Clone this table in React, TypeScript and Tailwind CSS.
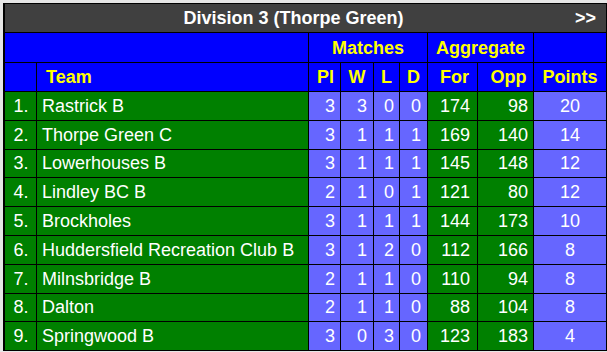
import React from "react";

type Row = {
  pos: number;
  team: string;
  pl: number;
  w: number;
  l: number;
  d: number;
  f: number;
  opp: number;
  pts: number;
};

const rows: Row[] = [
  { pos: 1, team: "Rastrick B", pl: 3, w: 3, l: 0, d: 0, f: 174, opp: 98, pts: 20 },
  { pos: 2, team: "Thorpe Green C", pl: 3, w: 1, l: 1, d: 1, f: 169, opp: 140, pts: 14 },
  { pos: 3, team: "Lowerhouses B", pl: 3, w: 1, l: 1, d: 1, f: 145, opp: 148, pts: 12 },
  { pos: 4, team: "Lindley BC B", pl: 2, w: 1, l: 0, d: 1, f: 121, opp: 80, pts: 12 },
  { pos: 5, team: "Brockholes", pl: 3, w: 1, l: 1, d: 1, f: 144, opp: 173, pts: 10 },
  { pos: 6, team: "Huddersfield Recreation Club B", pl: 3, w: 1, l: 2, d: 0, f: 112, opp: 166, pts: 8 },
  { pos: 7, team: "Milnsbridge B", pl: 2, w: 1, l: 1, d: 0, f: 110, opp: 94, pts: 8 },
  { pos: 8, team: "Dalton", pl: 2, w: 1, l: 1, d: 0, f: 88, opp: 104, pts: 8 },
  { pos: 9, team: "Springwood B", pl: 3, w: 0, l: 3, d: 0, f: 123, opp: 183, pts: 4 },
];

const cell = "flex items-center text-white";
const green = "bg-[#008000]";
const lilac = "bg-[#6666ff]";
const head = "flex items-center justify-center bg-[#0000ff] font-bold text-[#ffff00]";

export default function App() {
  return (
    <div className="min-h-screen bg-[#e6e6e6] p-[3px] font-['Liberation_Sans',Arial,sans-serif] text-[18px] leading-none">
      <div className="grid w-[604px] grid-cols-[31px_271px_31px_32px_25px_27px_49px_55px_72px] grid-rows-[28px_29px_28px_repeat(9,27.8px)] gap-px bg-black pb-px pl-[2px] pr-px pt-px">
        {/* title bar */}
        <div className="col-span-9 flex items-center bg-[#404040] font-bold text-white">
          <span className="flex-1 pl-[7px] text-center">Division 3 (Thorpe Green)</span>
          <span className="pr-[10px]">&gt;&gt;</span>
        </div>

        {/* header row 1 */}
        <div className="col-span-2 bg-[#0000ff]" />
        <div className={`col-span-4 ${head}`}>Matches</div>
        <div className={`col-span-2 ${head}`}>Aggregate</div>
        <div className="bg-[#0000ff]" />

        {/* header row 2 */}
        <div className="bg-[#0000ff]" />
        <div className={`${head} justify-start pl-[9px]`}>Team</div>
        <div className={`${head} pl-[2px]`}>Pl</div>
        <div className={head}>W</div>
        <div className={head}>L</div>
        <div className={head}>D</div>
        <div className={`${head} pl-[4px]`}>For</div>
        <div className={`${head} pl-[6px]`}>Opp</div>
        <div className={head}>Points</div>

        {rows.map((r) => (
          <React.Fragment key={r.pos}>
            <div className={`${cell} ${green} justify-center pl-px`}>{r.pos}.</div>
            <div className={`${cell} ${green} pl-[5px]`}>{r.team}</div>
            <div className={`${cell} ${lilac} justify-end pr-[5px]`}>{r.pl}</div>
            <div className={`${cell} ${lilac} justify-end pr-[6px]`}>{r.w}</div>
            <div className={`${cell} ${lilac} justify-end pr-[5px]`}>{r.l}</div>
            <div className={`${cell} ${lilac} justify-end pr-[6px]`}>{r.d}</div>
            <div className={`${cell} ${green} justify-end pr-[7px]`}>{r.f}</div>
            <div className={`${cell} ${green} justify-end pr-[5px]`}>{r.opp}</div>
            <div className={`${cell} ${lilac} justify-center`}>{r.pts}</div>
          </React.Fragment>
        ))}
      </div>
    </div>
  );
}
